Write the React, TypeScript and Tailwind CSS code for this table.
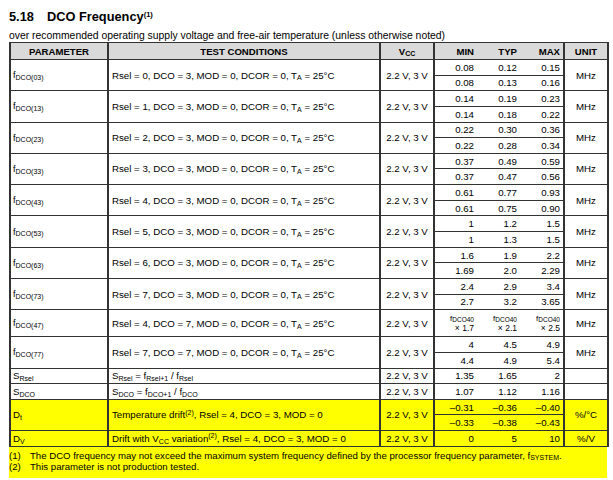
import React from "react";

const B = "border-[#333]";
const V = "2.2 V, 3 V";

function Sub({ children }: { children: React.ReactNode }) {
  return <sub className="text-[7px] leading-none">{children}</sub>;
}
function Sup({ children }: { children: React.ReactNode }) {
  return <sup className="text-[7px] leading-none">{children}</sup>;
}

type Vals = [React.ReactNode, React.ReactNode, React.ReactNode];

type Group = {
  param: React.ReactNode;
  cond: React.ReactNode;
  rows: Vals[];
  unit: string;
  yellow?: boolean;
  tall?: boolean;
};

const cond = (r: number, d: number) => (
  <>
    Rsel = {r}, DCO = {d}, MOD = 0, DCOR = 0, T<Sub>A</Sub> = 25°C
  </>
);
const fp = (s: string) => (
  <>
    <span className="text-[9px]">f</span>
    <Sub>DCO({s})</Sub>
  </>
);
const mul = (m: string) => (
  <div className="flex flex-col items-end leading-[10px] text-[8.5px]">
    <span className="leading-[9px]">
      <span className="text-[8px]">f</span>
      <sub className="text-[6.5px] leading-none">DCO40</sub>
    </span>
    <span className="leading-[10px]">× {m}</span>
  </div>
);

const groups: Group[] = [
  { param: fp("03"), cond: cond(0, 3), rows: [["0.08", "0.12", "0.15"], ["0.08", "0.13", "0.16"]], unit: "MHz" },
  { param: fp("13"), cond: cond(1, 3), rows: [["0.14", "0.19", "0.23"], ["0.14", "0.18", "0.22"]], unit: "MHz" },
  { param: fp("23"), cond: cond(2, 3), rows: [["0.22", "0.30", "0.36"], ["0.22", "0.28", "0.34"]], unit: "MHz" },
  { param: fp("33"), cond: cond(3, 3), rows: [["0.37", "0.49", "0.59"], ["0.37", "0.47", "0.56"]], unit: "MHz" },
  { param: fp("43"), cond: cond(4, 3), rows: [["0.61", "0.77", "0.93"], ["0.61", "0.75", "0.90"]], unit: "MHz" },
  { param: fp("53"), cond: cond(5, 3), rows: [["1", "1.2", "1.5"], ["1", "1.3", "1.5"]], unit: "MHz" },
  { param: fp("63"), cond: cond(6, 3), rows: [["1.6", "1.9", "2.2"], ["1.69", "2.0", "2.29"]], unit: "MHz" },
  { param: fp("73"), cond: cond(7, 3), rows: [["2.4", "2.9", "3.4"], ["2.7", "3.2", "3.65"]], unit: "MHz" },
  { param: fp("47"), cond: cond(4, 7), rows: [[mul("1.7"), mul("2.1"), mul("2.5")]], unit: "MHz", tall: true },
  { param: fp("77"), cond: cond(7, 7), rows: [["4", "4.5", "4.9"], ["4.4", "4.9", "5.4"]], unit: "MHz" },
  {
    param: (
      <>
        S<Sub>Rsel</Sub>
      </>
    ),
    cond: (
      <>
        S<Sub>Rsel</Sub> = f<Sub>Rsel+1</Sub> / f<Sub>Rsel</Sub>
      </>
    ),
    rows: [["1.35", "1.65", "2"]],
    unit: "",
  },
  {
    param: (
      <>
        S<Sub>DCO</Sub>
      </>
    ),
    cond: (
      <>
        S<Sub>DCO</Sub> = f<Sub>DCO+1</Sub> / f<Sub>DCO</Sub>
      </>
    ),
    rows: [["1.07", "1.12", "1.16"]],
    unit: "",
  },
  {
    param: (
      <>
        D<Sub>t</Sub>
      </>
    ),
    cond: (
      <>
        Temperature drift<Sup>(2)</Sup>, Rsel = 4, DCO = 3, MOD = 0
      </>
    ),
    rows: [["–0.31", "–0.36", "–0.40"], ["–0.33", "–0.38", "–0.43"]],
    unit: "%/°C",
    yellow: true,
  },
  {
    param: (
      <>
        D<Sub>V</Sub>
      </>
    ),
    cond: (
      <>
        Drift with V<Sub>CC</Sub> variation<Sup>(2)</Sup>, Rsel = 4, DCO = 3, MOD = 0
      </>
    ),
    rows: [["0", "5", "10"]],
    unit: "%/V",
    yellow: true,
  },
];

function GroupRows({ g }: { g: Group }) {
  const n = g.rows.length;
  const bg = g.yellow ? "bg-[#ffff00]" : "";
  const vh = g.tall ? "h-[27px]" : "h-[15.65px]";
  return (
    <>
      {g.rows.map((r, i) => (
        <tr key={i} className={bg}>
          {i === 0 && (
            <>
              <td rowSpan={n} className={`border-t border-x-2 ${B} pl-[2px] align-middle`}>
                {g.param}
              </td>
              <td rowSpan={n} className={`border-t border-x-2 ${B} pl-[3px] align-middle whitespace-nowrap`}>
                {g.cond}
              </td>
              <td rowSpan={n} className={`border-t border-x-2 ${B} text-center align-middle`}>
                {V}
              </td>
            </>
          )}
          {r.map((v, j) => (
            <td
              key={j}
              className={`border-t ${B} ${vh} p-0 pr-[3px] text-right align-middle ${j === 0 ? `border-l-2` : ""} ${
                j === 2 ? "border-r-2" : ""
              }`}
            >
              {v}
            </td>
          ))}
          {i === 0 && (
            <td rowSpan={n} className={`border-t border-x-2 ${B} text-center align-middle`}>
              {g.unit}
            </td>
          )}
        </tr>
      ))}
    </>
  );
}

export default function App() {
  return (
    <div className="w-[613px] h-[480px] bg-white text-black font-['Liberation_Sans',Arial,sans-serif] pl-[9px] pt-[9px]">
      <h1 className="text-[12.8px] font-bold leading-[16px] whitespace-nowrap">
        5.18<span className="inline-block w-[13px]" />DCO Frequency
        <sup className="text-[7.5px] leading-none">(1)</sup>
      </h1>
      <p className="text-[10.4px] leading-[12px] mt-[5px] whitespace-nowrap">
        over recommended operating supply voltage and free-air temperature (unless otherwise noted)
      </p>
      <table className="table-fixed border-collapse text-[9.7px] leading-[11px] w-[598px] mt-0">
        <colgroup>
          <col className="w-[98px]" />
          <col className="w-[272px]" />
          <col className="w-[54px]" />
          <col className="w-[43px]" />
          <col className="w-[43px]" />
          <col className="w-[44px]" />
          <col className="w-[44px]" />
        </colgroup>
        <thead>
          <tr className="bg-[#dadada] font-bold h-[17px] text-[9.6px]">
            <th className={`border border-x-2 ${B} text-center`}>PARAMETER</th>
            <th className={`border border-x-2 ${B} text-center`}>TEST CONDITIONS</th>
            <th className={`border border-x-2 ${B} text-center`}>
              V<Sub>CC</Sub>
            </th>
            <th className={`border-y border-l-2 ${B} text-right pr-[3px]`}>MIN</th>
            <th className={`border-y ${B} text-right pr-[3px]`}>TYP</th>
            <th className={`border-y border-r-2 ${B} text-right pr-[3px]`}>MAX</th>
            <th className={`border border-x-2 ${B} text-center`}>UNIT</th>
          </tr>
        </thead>
        <tbody>
          {groups.map((g, i) => (
            <GroupRows key={i} g={g} />
          ))}
          <tr>
            <td colSpan={7} className={`border-t ${B} p-0 h-0`} />
          </tr>
        </tbody>
      </table>
      <div className="w-[598px] bg-[#ffff00] text-[9.6px] leading-[11px] pt-[3px] pb-[6px]">
        <div className="flex">
          <span className="w-[21px]">(1)</span>
          <span>
            The DCO frequency may not exceed the maximum system frequency defined by the processor frequency parameter, f
            <Sub>SYSTEM</Sub>.
          </span>
        </div>
        <div className="flex">
          <span className="w-[21px]">(2)</span>
          <span>This parameter is not production tested.</span>
        </div>
      </div>
    </div>
  );
}
